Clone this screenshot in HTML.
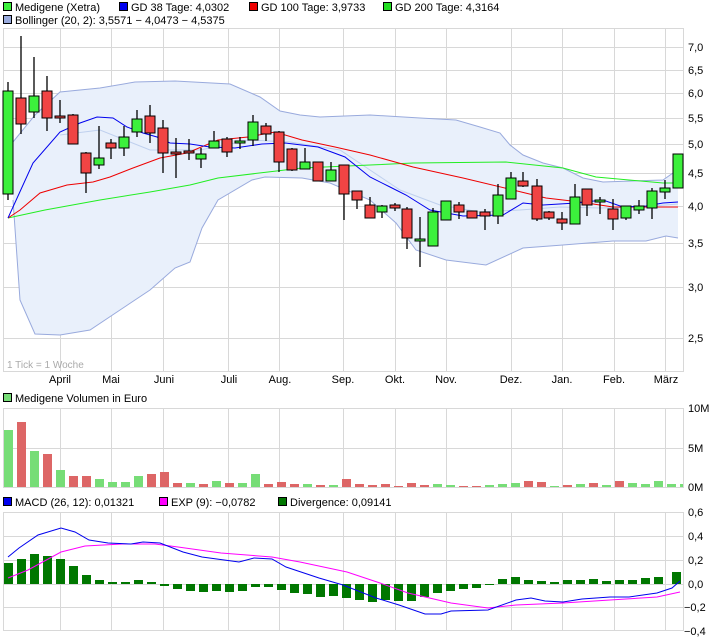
<!DOCTYPE html><html><head><meta charset="utf-8"><style>
html,body{margin:0;padding:0;background:#fff;}
svg{display:block;font-family:"Liberation Sans",sans-serif;font-size:11px;}
</style></head><body>
<svg width="726" height="640" viewBox="0 0 726 640" xmlns="http://www.w3.org/2000/svg">
<!-- legends -->
<g fill="#000">
<rect x="3.5" y="2.5" width="8" height="8" fill="#3cf03c" stroke="#000"/><text x="15" y="11">Medigene (Xetra)</text>
<rect x="119.5" y="2.5" width="8" height="8" fill="#0000ee" stroke="#000"/><text x="131" y="11">GD 38 Tage: 4,0302</text>
<rect x="249.5" y="2.5" width="8" height="8" fill="#ee0000" stroke="#000"/><text x="261" y="11">GD 100 Tage: 3,9733</text>
<rect x="383.5" y="2.5" width="8" height="8" fill="#22dd22" stroke="#000"/><text x="395" y="11">GD 200 Tage: 4,3164</text>
<rect x="3.5" y="15.5" width="8" height="8" fill="#99aadd" stroke="#000"/><text x="15" y="24">Bollinger (20, 2): 3,5571 − 4,0473 − 4,5375</text>
</g>
<!-- main grid -->
<g stroke="#d8d8d8" fill="none">
<rect x="3.5" y="28.5" width="680" height="343"/>
<path d="M3 47.5H683M3 70.5H683M3 93.5H683M3 118.5H683M3 144.5H683M3 173.5H683M3 206.5H683M3 243.5H683M3 287.5H683M3 338.5H683"/>
<path d="M60.5 28V372M111.5 28V372M163.5 28V372M228.5 28V372M279.5 28V372M343.5 28V372M395.5 28V372M446.5 28V372M511.5 28V372M562.5 28V372M614.5 28V372M665.5 28V372"/>
</g>
<!-- bollinger -->
<path d="M13 142L35 115L60 92L100 88L135 82L175 81L230 84L260 97L280 111L300 115L320 117L370 115L420 118L456 120L480 127L500 133L510 145L523 155L543 163L563 168L583 178L603 182L663 180L673 173L678 172L678 238L666 236L646 241L613 241L563 245L523 248L486 265L446 260L416 250L396 223L370 200L330 183L302 178L265 177L252 180L218 200L202 228L190 262L175 268L150 290L120 310L90 330L60 335L35 334L20 300L13 200Z" fill="#e9f0fb" stroke="none"/>
<polyline fill="none" stroke="#99aadd" points="13,142 35,115 60,92 100,88 135,82 175,81 230,84 260,97 280,111 300,115 320,117 370,115 420,118 456,120 480,127 500,133 510,145 523,155 543,163 563,168 583,178 603,182 663,180 673,173 678,172"/>
<polyline fill="none" stroke="#99aadd" points="13,200 20,300 35,334 60,335 90,330 120,310 150,290 175,268 190,262 202,228 218,200 252,180 265,177 302,178 330,183 370,200 396,223 416,250 446,260 486,265 523,248 563,245 613,241 646,241 666,236 678,238"/>
<polyline fill="none" stroke="#bfd0ee" points="60,135 100,130 150,150 200,150 250,140 290,142 340,150 370,170 400,190 440,205 480,212 520,210 560,207 600,208 640,207 678,204"/>
<!-- MAs -->
<polyline fill="none" stroke="#22ee22" points="8,218 45,210 100,200 150,192 190,185 218,178 268,172 302,168 370,165 413,163 506,162 563,168 596,177 663,183 673,183"/>
<polyline fill="none" stroke="#ee0000" points="8,218 20,210 40,193 67,185 93,182 110,177 133,168 160,158 187,153 218,140 248,137 275,132 302,140 335,147 370,155 413,167 463,178 513,190 546,198 580,202 613,207 678,207"/>
<polyline fill="none" stroke="#0000ee" points="8,218 33,163 60,132 80,123 97,117 113,118 127,127 143,133 157,137 170,143 190,144 210,147 235,148 262,144 285,143 318,147 345,157 370,177 390,187 406,195 430,210 463,216 503,215 523,203 543,205 576,203 603,200 623,207 646,206 663,203 678,202"/>
<!-- candles -->
<g stroke="#000" stroke-width="1.3">
<path d="M8 82V200M21 36V134M34 57V118M47 76V131M60 100V123M73 114V144M86 152V193M99 126V169M111 139V159M124 126V156M137 110V137M150 105V143M163 120V173M176 138V178M189 139V160M201 148V168M214 131V148M227 137V157M240 137V149M253 115V146M266 123V141M279 131V172M292 148V171M305 148V169M318 162V181M331 162V181M344 165V220M357 191V209M370 197V218M382 205V218M395 203V211M407 207V249M420 217V267M433 208V246M446 201V220M459 202V219M472 211V218M485 209V230M498 184V224M511 172V199M523 172V187M537 179V221M549 211V220M562 212V230M575 184V224M587 189V216M600 197V214M613 199V230M626 206V220M639 200V214M652 188V219M665 180V199M678 154V188"/>
</g>
<g stroke="#000" stroke-width="1">
<g fill="#3cf03c">
<rect x="3" y="91" width="10" height="103"/><rect x="29" y="96" width="10" height="16"/><rect x="94" y="158" width="10" height="7"/><rect x="119" y="137" width="10" height="11"/><rect x="132" y="119" width="10" height="13"/><rect x="196" y="154" width="10" height="5"/><rect x="209" y="141" width="10" height="7"/><rect x="235" y="141" width="10" height="2"/><rect x="248" y="122" width="10" height="18"/><rect x="300" y="162" width="10" height="7"/><rect x="326" y="170" width="10" height="11"/><rect x="377" y="206" width="10" height="6"/><rect x="415" y="239" width="10" height="2"/><rect x="428" y="212" width="10" height="34"/><rect x="441" y="201" width="10" height="19"/><rect x="493" y="195" width="10" height="21"/><rect x="506" y="178" width="10" height="21"/><rect x="570" y="197" width="10" height="27"/><rect x="595" y="200" width="10" height="2"/><rect x="621" y="206" width="10" height="12"/><rect x="634" y="206" width="10" height="4"/><rect x="647" y="191" width="10" height="17"/><rect x="660" y="188" width="10" height="4"/><rect x="673" y="154" width="10" height="34"/>
</g>
<g fill="#f04444">
<rect x="16" y="98" width="10" height="26"/><rect x="42" y="91" width="10" height="27"/><rect x="55" y="116" width="10" height="2"/><rect x="68" y="115" width="10" height="29"/><rect x="81" y="153" width="10" height="20"/><rect x="106" y="143" width="10" height="5"/><rect x="145" y="116" width="10" height="17"/><rect x="158" y="128" width="10" height="25"/><rect x="171" y="152" width="10" height="2"/><rect x="184" y="151" width="10" height="2"/><rect x="222" y="139" width="10" height="13"/><rect x="261" y="126" width="10" height="8"/><rect x="274" y="132" width="10" height="30"/><rect x="287" y="149" width="10" height="21"/><rect x="313" y="162" width="10" height="19"/><rect x="339" y="165" width="10" height="29"/><rect x="352" y="191" width="10" height="9"/><rect x="365" y="205" width="10" height="13"/><rect x="390" y="205" width="10" height="3"/><rect x="402" y="209" width="10" height="29"/><rect x="454" y="205" width="10" height="7"/><rect x="467" y="211" width="10" height="7"/><rect x="480" y="212" width="10" height="4"/><rect x="518" y="181" width="10" height="5"/><rect x="532" y="186" width="10" height="33"/><rect x="544" y="212" width="10" height="6"/><rect x="557" y="219" width="10" height="4"/><rect x="582" y="189" width="10" height="16"/><rect x="608" y="209" width="10" height="10"/>
</g>
</g>
<!-- y labels -->
<g fill="#000">
<text x="688" y="51">7,0</text><text x="688" y="74">6,5</text><text x="688" y="97">6,0</text><text x="688" y="122">5,5</text><text x="688" y="148">5,0</text><text x="688" y="177">4,5</text><text x="688" y="210">4,0</text><text x="688" y="247">3,5</text><text x="688" y="291">3,0</text><text x="688" y="342">2,5</text>
</g>
<text x="7" y="368" fill="#aaa" font-size="10">1 Tick = 1 Woche</text>
<g fill="#000" text-anchor="middle">
<text x="60" y="383">April</text><text x="111" y="383">Mai</text><text x="164" y="383">Juni</text><text x="229" y="383">Juli</text><text x="280" y="383">Aug.</text><text x="343" y="383">Sep.</text><text x="395" y="383">Okt.</text><text x="446" y="383">Nov.</text><text x="511" y="383">Dez.</text><text x="562" y="383">Jan.</text><text x="614" y="383">Feb.</text><text x="666" y="383">März</text>
</g>
<!-- volume -->
<rect x="3.5" y="393.5" width="8" height="8" fill="#77dd77" stroke="#000"/><text x="15" y="402">Medigene Volumen in Euro</text>
<g stroke="#d8d8d8" fill="none">
<rect x="3.5" y="408.5" width="680" height="79"/>
<path d="M3 448.5H683M60.5 408V488M111.5 408V488M163.5 408V488M228.5 408V488M279.5 408V488M343.5 408V488M395.5 408V488M446.5 408V488M511.5 408V488M562.5 408V488M614.5 408V488M665.5 408V488"/>
</g>
<g fill="#dd6666">
<rect x="17" y="422" width="9" height="65"/><rect x="43" y="454" width="9" height="33"/><rect x="69" y="476" width="9" height="11"/><rect x="82" y="476" width="9" height="11"/><rect x="147" y="474" width="9" height="13"/><rect x="160" y="472" width="9" height="15"/><rect x="173" y="483" width="9" height="4"/><rect x="199" y="484" width="9" height="3"/><rect x="225" y="483" width="9" height="4"/><rect x="264" y="484" width="9" height="3"/><rect x="277" y="482" width="9" height="5"/><rect x="290" y="484" width="9" height="3"/><rect x="316" y="485" width="9" height="2"/><rect x="342" y="479" width="9" height="8"/><rect x="355" y="484" width="9" height="3"/><rect x="368" y="485" width="9" height="2"/><rect x="381" y="484" width="9" height="3"/><rect x="394" y="486" width="9" height="1"/><rect x="407" y="483" width="9" height="4"/><rect x="420" y="485" width="9" height="2"/><rect x="459" y="486" width="9" height="1"/><rect x="472" y="486" width="9" height="1"/><rect x="524" y="481" width="9" height="6"/><rect x="537" y="482" width="9" height="5"/><rect x="563" y="485" width="9" height="2"/><rect x="589" y="483" width="9" height="4"/><rect x="615" y="481" width="9" height="6"/>
</g>
<g fill="#77dd77">
<rect x="4" y="430" width="9" height="57"/><rect x="30" y="451" width="9" height="36"/><rect x="56" y="470" width="9" height="17"/><rect x="95" y="479" width="9" height="8"/><rect x="108" y="482" width="9" height="5"/><rect x="121" y="482" width="9" height="5"/><rect x="134" y="476" width="9" height="11"/><rect x="186" y="483" width="9" height="4"/><rect x="212" y="481" width="9" height="6"/><rect x="238" y="483" width="9" height="4"/><rect x="251" y="474" width="9" height="13"/><rect x="303" y="484" width="9" height="3"/><rect x="329" y="485" width="9" height="2"/><rect x="433" y="484" width="9" height="3"/><rect x="446" y="485" width="9" height="2"/><rect x="485" y="485" width="9" height="2"/><rect x="498" y="484" width="9" height="3"/><rect x="511" y="483" width="9" height="4"/><rect x="550" y="486" width="9" height="1"/><rect x="576" y="484" width="9" height="3"/><rect x="602" y="485" width="9" height="2"/><rect x="628" y="483" width="9" height="4"/><rect x="641" y="484" width="9" height="3"/><rect x="654" y="481" width="9" height="6"/><rect x="667" y="484" width="9" height="3"/><rect x="680" y="484" width="3" height="3"/>
</g>
<text x="688" y="412">10M</text><text x="688" y="452">5M</text><text x="688" y="491">0M</text>
<!-- MACD -->
<rect x="3.5" y="497.5" width="8" height="8" fill="#0000ee" stroke="#000"/><text x="15" y="506">MACD (26, 12): 0,01321</text>
<rect x="159.5" y="497.5" width="8" height="8" fill="#ff00ff" stroke="#000"/><text x="171" y="506">EXP (9): −0,0782</text>
<rect x="278.5" y="497.5" width="8" height="8" fill="#007700" stroke="#000"/><text x="290" y="506">Divergence: 0,09141</text>
<g stroke="#d8d8d8" fill="none">
<rect x="3.5" y="512.5" width="680" height="118"/>
<path d="M3 536.5H683M3 560.5H683M3 584.5H683M3 607.5H683M60.5 512V631M111.5 512V631M163.5 512V631M228.5 512V631M279.5 512V631M343.5 512V631M395.5 512V631M446.5 512V631M511.5 512V631M562.5 512V631M614.5 512V631M665.5 512V631"/>
</g>
<g fill="#007700">
<rect x="4" y="563" width="9" height="21"/><rect x="17" y="559" width="9" height="25"/><rect x="30" y="554" width="9" height="30"/><rect x="43" y="556" width="9" height="28"/><rect x="56" y="559" width="9" height="25"/><rect x="69" y="566" width="9" height="18"/><rect x="82" y="575" width="9" height="9"/><rect x="95" y="580" width="9" height="4"/><rect x="108" y="582" width="9" height="2"/><rect x="121" y="582" width="9" height="2"/><rect x="134" y="580" width="9" height="4"/><rect x="147" y="582" width="9" height="2"/>
<rect x="160" y="584" width="9" height="2"/><rect x="173" y="584" width="9" height="5"/><rect x="186" y="584" width="9" height="7"/><rect x="199" y="584" width="9" height="8"/><rect x="212" y="584" width="9" height="7"/><rect x="225" y="584" width="9" height="8"/><rect x="238" y="584" width="9" height="7"/><rect x="251" y="584" width="9" height="3"/><rect x="264" y="584" width="9" height="3"/><rect x="277" y="584" width="9" height="6"/><rect x="290" y="584" width="9" height="9"/><rect x="303" y="584" width="9" height="10"/><rect x="316" y="584" width="9" height="13"/><rect x="329" y="584" width="9" height="12"/><rect x="342" y="584" width="9" height="14"/><rect x="355" y="584" width="9" height="16"/><rect x="368" y="584" width="9" height="18"/><rect x="381" y="584" width="9" height="16"/><rect x="394" y="584" width="9" height="17"/><rect x="407" y="584" width="9" height="17"/><rect x="420" y="584" width="9" height="13"/><rect x="433" y="584" width="9" height="9"/><rect x="446" y="584" width="9" height="7"/><rect x="459" y="584" width="9" height="5"/><rect x="472" y="584" width="9" height="4"/><rect x="485" y="584" width="9" height="1"/>
<rect x="498" y="579" width="9" height="5"/><rect x="511" y="577" width="9" height="7"/><rect x="524" y="580" width="9" height="4"/><rect x="537" y="581" width="9" height="3"/><rect x="550" y="582" width="9" height="2"/><rect x="563" y="580" width="9" height="4"/><rect x="576" y="580" width="9" height="4"/><rect x="589" y="579" width="9" height="5"/><rect x="602" y="581" width="9" height="3"/><rect x="615" y="580" width="9" height="4"/><rect x="628" y="580" width="9" height="4"/><rect x="641" y="578" width="9" height="6"/><rect x="654" y="577" width="9" height="7"/><rect x="672" y="572" width="9" height="12"/>
</g>
<polyline fill="none" stroke="#ff00ff" points="8,578 28,570 61,552 85,546 122,544 155,544 178,547 221,553 272,557 300,562 347,572 380,583 408,593 451,603 488,608 516,605 563,603 610,600 657,597 680,592"/>
<polyline fill="none" stroke="#0000ee" points="8,557 19,548 38,535 61,528 75,532 89,540 108,543 131,544 143,542 160,543 183,552 202,557 239,562 254,558 272,559 286,567 319,578 343,585 376,598 399,605 425,614 441,614 451,611 488,610 516,600 531,598 545,601 563,602 582,599 610,597 629,597 657,593 672,588 680,581"/>
<g fill="#000">
<text x="688" y="516">0,6</text><text x="688" y="540">0,4</text><text x="688" y="564">0,2</text><text x="688" y="588">0,0</text><text x="684" y="611">−0,2</text><text x="684" y="635">−0,4</text>
</g>
</svg>
</body></html>
